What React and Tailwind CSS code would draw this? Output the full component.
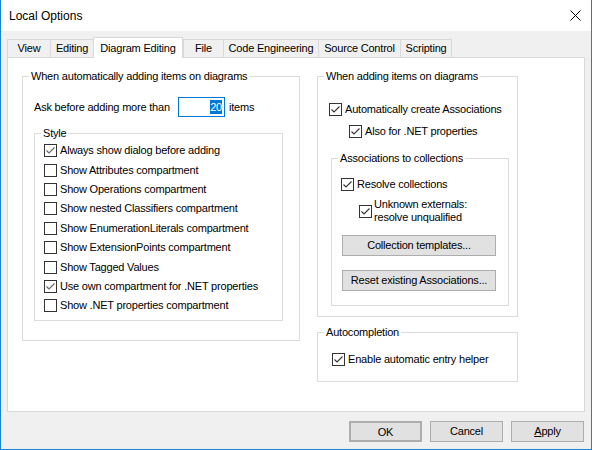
import React from 'react';

const font = "font-['Liberation_Sans',Arial,sans-serif]";

function Check({ checked, dim }) {
  return (
    <span className="inline-flex w-[13px] h-[13px] shrink-0 border border-[#333] bg-white">
      {checked && (
        <svg width="11" height="11" viewBox="0 0 11 11">
          <path d="M1.5 5.5 L4 8 L9.5 2.5" fill="none" stroke={dim ? '#666' : '#333'} strokeWidth="1.1" />
        </svg>
      )}
    </span>
  );
}

function Row({ checked, dim, children, className = '' }) {
  return (
    <div className={`flex items-center gap-[3px] ${className}`}>
      <Check checked={checked} dim={dim} />
      <span className="leading-[15px] whitespace-nowrap">{children}</span>
    </div>
  );
}

function Group({ label, className = '', children }) {
  return (
    <fieldset className={`border border-[#dcdcdc] ${className}`}>
      <legend className="ml-[6px] px-[2px] leading-[15px] whitespace-nowrap">{label}</legend>
      {children}
    </fieldset>
  );
}

function Btn({ children, className = '' }) {
  return (
    <button className={`h-[21px] bg-[#e1e1e1] border border-[#adadad] text-center leading-[19px] ${className}`}>
      {children}
    </button>
  );
}

const tabs = [
  { name: 'View', w: 'w-[43px]' },
  { name: 'Editing', w: 'w-[43px]' },
  { name: 'Diagram Editing', w: 'w-[90px]', active: true },
  { name: 'File', w: 'w-[40px]' },
  { name: 'Code Engineering', w: 'w-[95px]' },
  { name: 'Source Control', w: 'w-[82px]' },
  { name: 'Scripting', w: 'w-[52px]', last: true },
];

const styleRows = [
  ['Always show dialog before adding', true],
  ['Show Attributes compartment', false],
  ['Show Operations compartment', false],
  ['Show nested Classifiers compartment', false],
  ['Show EnumerationLiterals compartment', false],
  ['Show ExtensionPoints compartment', false],
  ['Show Tagged Values', false],
  ['Use own compartment for .NET properties', true],
  ['Show .NET properties compartment', false],
];

export default function App() {
  return (
    <div className={`w-[592px] h-[450px] bg-[#f0f0f0] border-x border-b border-[#1883d7] flex flex-col text-[11px] tracking-[-0.2px] text-black ${font}`}>
      {/* title bar */}
      <div className="h-[31px] bg-white flex items-center justify-between pl-[8px] pr-[10px] shrink-0">
        <span className="text-[12px] tracking-normal">Local Options</span>
        <svg width="11" height="11" viewBox="0 0 11 11">
          <path d="M0.5 0.5 L10.5 10.5 M10.5 0.5 L0.5 10.5" stroke="#000" strokeWidth="1" />
        </svg>
      </div>

      {/* tabs */}
      <div className="mt-[6px] ml-[6px] h-[20px] flex items-end">
        {tabs.map((t) =>
          t.active ? (
            <div
              key={t.name}
              className={`${t.w} h-[21px] -mb-px relative z-10 bg-white border-x border-t border-[#d9d9d9] flex items-start justify-center pt-[2px]`}
            >
              {t.name}
            </div>
          ) : (
            <div
              key={t.name}
              className={`${t.w} h-[18px] bg-[#f0f0f0] border-l border-t border-[#d9d9d9] ${t.last ? 'border-r' : ''} flex items-center justify-center`}
            >
              {t.name}
            </div>
          )
        )}
      </div>

      {/* panel */}
      <div className="ml-[6px] w-[578px] h-[355px] bg-white border border-[#d9d9d9] flex items-start pl-[14px] pt-[11px]">
        {/* left column */}
        <Group label="When automatically adding items on diagrams" className="w-[278px] h-[272px]">
          <div className="mt-[13px] ml-[11px] h-[20px] flex items-center">
            <span className="w-[144px] whitespace-nowrap">Ask before adding more than</span>
            <div className="w-[47px] h-[20px] border border-[#0078d7] flex items-center justify-end pr-[2px]">
              <span className="bg-[#0078d7] text-white leading-[14px]">20</span>
            </div>
            <span className="ml-[4px]">items</span>
          </div>
          <Group label="Style" className="mt-[9px] ml-[11px] w-[249px] pb-[4px]">
            {styleRows.map(([label, checked]) => (
              <Row key={label} checked={checked} dim className="h-[19.4px] pl-[9px]">
                {label}
              </Row>
            ))}
          </Group>
        </Group>

        {/* right column */}
        <div className="ml-[17px] w-[201px] flex flex-col">
          <Group label="When adding items on diagrams" className="w-[201px] pb-[10px]">
            <Row checked className="mt-[17px] pl-[11px] h-[16px]">Automatically create Associations</Row>
            <Row checked className="mt-[6px] pl-[31px] h-[16px]">Also for .NET properties</Row>
            <Group label="Associations to collections" className="mt-[12px] ml-[13px] w-[178px] pb-[14px]">
              <Row checked className="mt-[10px] pl-[9px] h-[16px]">Resolve collections</Row>
              <div className="mt-[6px] pl-[27px] flex items-center gap-[2px]">
                <Check checked />
                <span className="leading-[13px]">
                  Unknown externals:
                  <br />
                  resolve unqualified
                </span>
              </div>
              <Btn className="mt-[11px] ml-[10px] w-[154px]">Collection templates...</Btn>
              <Btn className="mt-[14px] ml-[10px] w-[154px]">Reset existing Associations...</Btn>
            </Group>
          </Group>
          <Group label="Autocompletion" className="mt-[8px] w-[201px] pb-[14px]">
            <Row checked className="mt-[11px] pl-[14px] h-[16px]">Enable automatic entry helper</Row>
          </Group>
        </div>
      </div>

      {/* footer */}
      <div className="mt-[9px] pr-[7px] flex justify-end gap-[8px]">
        <Btn className="w-[73px] border-2 border-[#0078d7] leading-[17px]">OK</Btn>
        <Btn className="w-[73px]">Cancel</Btn>
        <Btn className="w-[73px]">
          <u>A</u>pply
        </Btn>
      </div>
    </div>
  );
}
